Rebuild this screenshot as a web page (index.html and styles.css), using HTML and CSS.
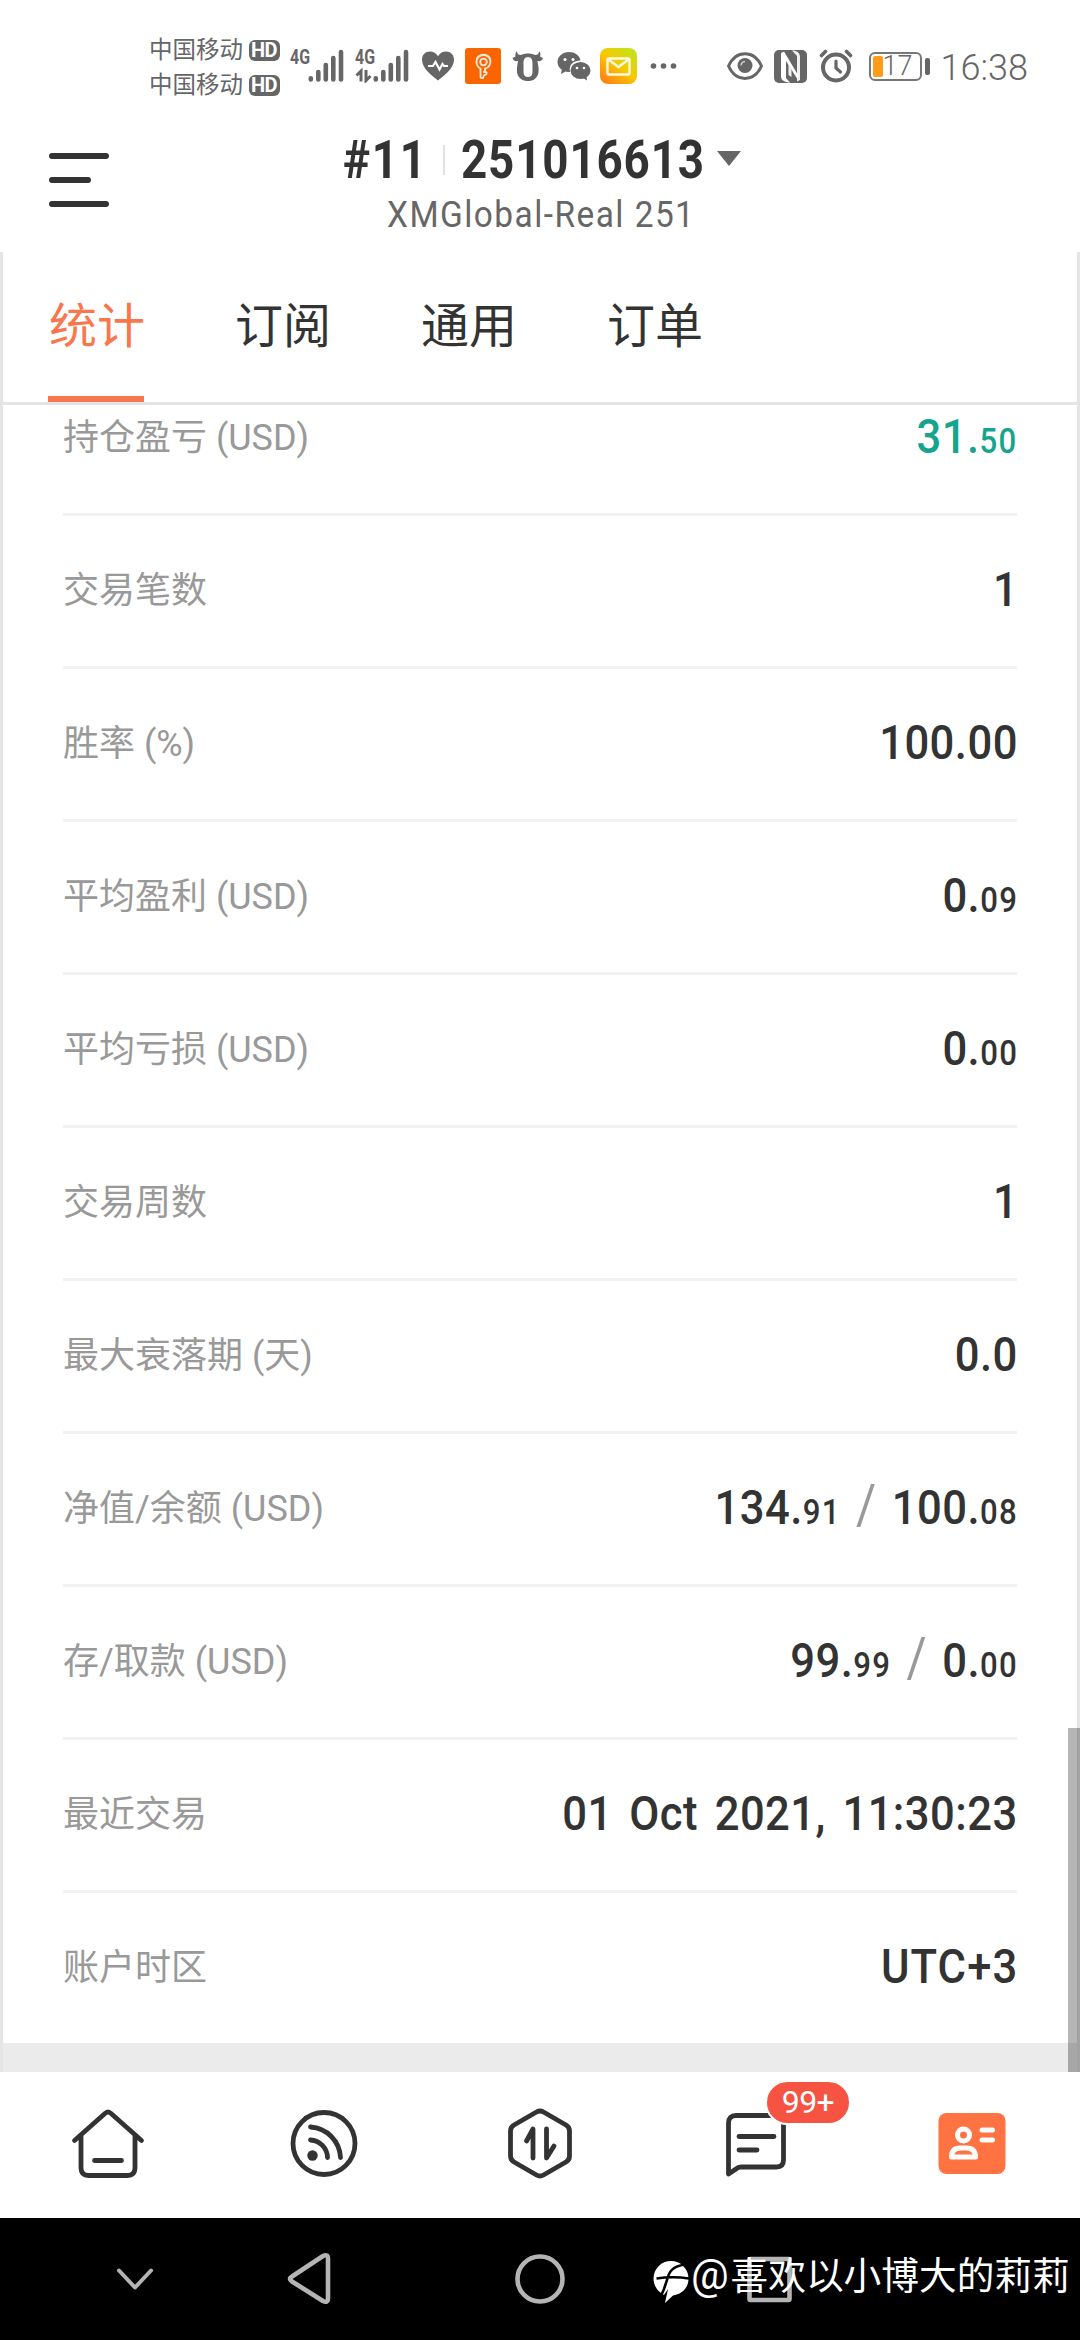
FILE: index.html
```
<!DOCTYPE html>
<html lang="zh-CN">
<head>
<meta charset="utf-8">
<title>账户统计</title>
<link rel="stylesheet" href="styles.css">
</head>
<body>
<div class="screen">
  <div class="status">
    <div class="carriers">
      <div class="carrier"><span>中国移动</span><b class="hd">HD</b></div>
      <div class="carrier"><span>中国移动</span><b class="hd">HD</b></div>
    </div>
    <div class="signal">
      <span class="net">4G</span>
      <svg width="54" height="34" viewBox="0 0 54 34"><g stroke="#666" stroke-width="4.6" stroke-linecap="round"><path d="M20.8 29.3v1.2M28.3 23v7.5M35.8 16v14.5M43.3 9v21.5M51 3v27.5"/></g></svg>
    </div>
    <div class="signal second">
      <span class="net">4G</span>
      <svg width="54" height="34" viewBox="0 0 54 34"><g stroke="#666" stroke-width="4.6" stroke-linecap="round"><path d="M20.8 29.3v1.2M28.3 23v7.5M35.8 16v14.5M43.3 9v21.5M51 3v27.5"/></g><path d="M1.500 26.500l4.500-4.500v10.500M11 21v10.500l4.500-4.500" fill="none" stroke="#666" stroke-width="3"/></svg>
    </div>
    <svg class="s-heart" width="34" height="32" viewBox="0 0 34 32"><path d="M17 30.500C12 26.500 1 18.500 1 9.700 1 4.500 4.700 1.500 8.800 1.500c3.700 0 6.500 2 8.200 4.700 1.700-2.700 4.500-4.700 8.200-4.700 4.100 0 7.800 3 7.800 8.200 0 8.800-11 16.800-16 20.800z" fill="#666"/><path d="M7 16h5l2.500-4 4 7.500 3-5.500 1.500 2h4" fill="none" stroke="#fff" stroke-width="2.200"/></svg>
    <svg class="s-pic" width="36" height="36" viewBox="0 0 36 36"><rect width="36" height="36" rx="3" fill="#fb6500"/><g fill="none" stroke="#ffeadb" stroke-width="1.800" stroke-linejoin="round"><path d="M15.500 30V20.500C12.500 19 11.500 16.500 11.500 14a7 7 0 1 1 8.500 6.600v3.400h-2M15.500 30h2.500l1-2.500 2.500-1.500v-2.500"/><circle cx="18.500" cy="14" r="3.300"/><path d="M11.500 11.500c2-5.500 11-6.500 14 0"/></g></svg>
    <svg class="s-ox" width="32" height="34" viewBox="0 0 32 34"><path fill-rule="evenodd" fill="#666" d="M5 2c0 2.500 1 4 4 4 4-2 10-2 14 0 3 0 4-1.500 4-4 1.500 1.500 2 3.500 1 5.500l3 1.500c-1 3-3 3.500-5.500 3 .5 4 1.500 7 1 11.500-1 6-5.500 8.500-10.500 8.500S6 29.500 5 23.500c-.5-4.500.5-7.500 1-11.500-2.500.5-4.500 0-5.500-3l3-1.500C3 5.500 3.500 3.500 5 2zM16 8c-3.500 0-4.500 3-4.500 6v9c0 3.500 1.500 5 4.500 5s4.500-1.500 4.500-5v-9c0-3-1-6-4.500-6z"/></svg>
    <svg class="s-chat" width="36" height="32" viewBox="0 0 36 32"><path fill="#666" d="M13 2C6.500 2 1.500 6.500 1.500 12c0 3.200 1.700 6 4.300 7.800L5 24l4.500-2.500c1.500.4 2.800.5 4.500.5C12.500 14 18 10.500 24.500 10.500 23.500 5 18.500 2 13 2z"/><ellipse cx="24.500" cy="20.500" rx="10" ry="8.600" fill="#666"/><path d="M27 28l4 2.500-.5-4.500" fill="#666"/><g fill="#fff"><circle cx="9" cy="9.500" r="1.500"/><circle cx="17" cy="9.500" r="1.500"/><circle cx="21" cy="18" r="1.300"/><circle cx="28" cy="18" r="1.300"/></g></svg>
    <svg class="s-mail" width="37" height="36" viewBox="0 0 37 36"><defs><linearGradient id="mail" x1=".1" y1="1" x2=".9" y2="0"><stop offset="0" stop-color="#ff7a1a"/><stop offset=".5" stop-color="#f8c800"/><stop offset="1" stop-color="#bde61a"/></linearGradient></defs><rect width="37" height="36" rx="8" fill="url(#mail)"/><rect x="7.500" y="10.500" width="22" height="16" rx="1.500" fill="none" stroke="#fffbe0" stroke-width="2.400"/><path d="M9 12l9.500 7 9.500-7" fill="none" stroke="#fffbe0" stroke-width="2.400"/></svg>
    <svg class="s-dots" width="28" height="8" viewBox="0 0 28 8"><g fill="#666"><circle cx="3.500" cy="4" r="2.800"/><circle cx="13.500" cy="4" r="2.800"/><circle cx="23.500" cy="4" r="2.800"/></g></svg>
    <svg class="s-eye" width="38" height="30" viewBox="0 0 38 30"><path d="M2.500 15C10 -1.500 28 -1.500 35.500 15 28 31.500 10 31.500 2.500 15z" fill="none" stroke="#666" stroke-width="3"/><circle cx="19" cy="14.500" r="7.500" fill="#666"/><path d="M15 14.500a4.500 4.500 0 0 1 4-4" stroke="#ccc" stroke-width="1.500" fill="none"/></svg>
    <svg class="s-nfc" width="33" height="33" viewBox="0 0 33 33"><rect width="33" height="33" rx="5" fill="#666"/><g fill="#fff"><path d="M7 3l3-1.500L24 25v5L12 11v17l4 4.500h-2C9 31 7 30 7 26z"/><path d="M26 30l-3 1.500V6l-5-5.500h2c4 1 6 3 6 7zM14.500 14.500l3 5V27l-3-2z" fill-opacity=".9"/></g></svg>
    <svg class="s-alarm" width="34" height="34" viewBox="0 0 34 34"><g fill="none" stroke="#666" stroke-linecap="round"><circle cx="17" cy="18.500" r="13" stroke-width="4"/><path d="M17 12v7l4.500 4" stroke-width="3.200"/><path d="M2.500 6.500l4-4M31.500 6.500l-4-4" stroke-width="3.600"/></g></svg>
    <div class="battery"><i></i><span>17</span></div><div class="nub"></div>
    <span class="clock">16:38</span>
  </div>

  <header class="header">
    <svg class="menu" width="60" height="54" viewBox="0 0 60 54"><g fill="#333"><rect width="60" height="6" rx="3"/><rect y="24" width="42" height="6" rx="3"/><rect y="48" width="60" height="6" rx="3"/></g></svg>
    <div class="account">
      <div class="account-line"><span class="num rank">#11</span><i class="divider"></i><span class="num login">251016613</span><i class="caret"></i></div>
      <div class="server">XMGlobal-Real 251</div>
    </div>
  </header>

  <main class="panel">
    <nav class="tabs"><span class="tab active">统计</span><span class="tab">订阅</span><span class="tab">通用</span><span class="tab">订单</span></nav>
    <div class="scroll">
      <div class="rows">
        <div class="row"><span class="label">持仓盈亏 (USD)</span><span class="value profit">31.<small>50</small></span></div>
        <div class="row"><span class="label">交易笔数</span><span class="value">1</span></div>
        <div class="row"><span class="label">胜率 (%)</span><span class="value">100.00</span></div>
        <div class="row"><span class="label">平均盈利 (USD)</span><span class="value">0.<small>09</small></span></div>
        <div class="row"><span class="label">平均亏损 (USD)</span><span class="value">0.<small>00</small></span></div>
        <div class="row"><span class="label">交易周数</span><span class="value">1</span></div>
        <div class="row"><span class="label">最大衰落期 (天)</span><span class="value">0.0</span></div>
        <div class="row"><span class="label">净值/余额 (USD)</span><span class="value">134.<small>91</small><em>/</em>100.<small>08</small></span></div>
        <div class="row"><span class="label">存/取款 (USD)</span><span class="value">99.<small>99</small><em>/</em>0.<small>00</small></span></div>
        <div class="row"><span class="label">最近交易</span><span class="value">01 Oct 2021, 11:30:23</span></div>
        <div class="row"><span class="label">账户时区</span><span class="value zone">UTC+3</span></div>
      </div>
    </div>
    <div class="scrollbar"></div>
  </main>

  <nav class="bottom">
    <div class="item"><svg width="80" height="80" viewBox="0 0 80 80"><g fill="none" stroke="#333" stroke-width="4.800" stroke-linecap="round" stroke-linejoin="round"><path d="M6.500 36.500L37.500 9q2.500-2 5 0L73.500 36.500M13 31.500V64q0 7.500 7.500 7.500h39q7.500 0 7.500-7.500V31.500M26.500 56.500h27"/></g></svg></div>
    <div class="item"><svg width="80" height="80" viewBox="0 0 80 80"><g fill="none" stroke="#333" stroke-width="4.800" stroke-linecap="round"><circle cx="40" cy="39.500" r="31"/><path d="M26.500 23A32 32 0 0 1 56.500 53.500M26.500 36A18 18 0 0 1 43.500 53.500"/></g><circle cx="28.500" cy="51.500" r="5.200" fill="#333"/></svg></div>
    <div class="item"><svg width="80" height="80" viewBox="0 0 80 80"><g fill="none" stroke="#333" stroke-width="4.800" stroke-linecap="round" stroke-linejoin="round"><path d="M36.500 8q3.500-2 7 0L66 21q3.500 2 3.500 6v25q0 4-3.500 6L43.500 71q-3.500 2-7 0L14 58q-3.500-2-3.500-6V27q0-4 3.500-6zM26.500 37L33 25v29M46.500 25v29l7.500-12"/></g></svg></div>
    <div class="item"><svg width="80" height="80" viewBox="0 0 80 80"><g fill="none" stroke="#333" stroke-width="4.800" stroke-linecap="round" stroke-linejoin="round"><path d="M12.500 70V19q0-7.500 7.500-7.500h41q6.500 0 6.500 6.500V56q0 7-7 7H25q-3 0-5 2zM23 32.500h35M23 46h18"/></g></svg><b class="badge">99+</b></div>
    <div class="item"><svg width="80" height="80" viewBox="0 0 80 80"><rect x="6.500" y="9" width="67" height="61" rx="8" fill="#ff7342"/><g fill="none" stroke="#fff" stroke-width="5" stroke-linecap="round" stroke-linejoin="round"><circle cx="31.500" cy="31" r="6"/><path d="M19.500 53q0-9 9-9h6q9 0 9 9zM50 26h10.500M50 36h10.500" /></g></svg></div>
  </nav>

  <footer class="sysnav">
    <svg class="keys" width="1080" height="122" viewBox="0 0 1080 122"><g fill="none" stroke="#b4b4b4" stroke-width="4.600" stroke-linecap="round" stroke-linejoin="round"><path d="M119 52.500l16 17 16-17" stroke-width="4"/><path d="M292 58.500l31-20.500q5-2.500 5 3v39q0 5.500-5 3L292 63.500q-4-2.500 0-5z"/><circle cx="540" cy="61" r="22.500"/><rect x="749.500" y="41" width="40" height="41" rx="1"/></g></svg>
    <div class="credit">
      <svg width="36" height="44" viewBox="0 0 36 44"><path d="M18 1a17.500 17.500 0 0 1 17.500 17.500C35.500 28 29 34 20 35.500L12 43l3-14-4 6C5 32 .5 26 .5 18.500A17.500 17.500 0 0 1 18 1z" fill="#fff"/><path d="M34 4.500C24 5 17 9 15 17l-4 12-4 9M3.500 18.500Q20 16 36 18.500" fill="none" stroke="#000" stroke-width="2.600"/></svg>
      <span><span class="at">@</span>喜欢以小博大的莉莉</span>
    </div>
  </footer>
</div>
</body>
</html>
```
FILE: styles.css
```
* { box-sizing: border-box; }
body {
  margin: 0;
  background: #fff;
  color: #333;
  font-family: Roboto, "Noto Sans CJK SC", sans-serif;
}
svg { display: block; flex: none; }
.screen {
  width: 1080px;
  height: 2340px;
  display: flex;
  flex-direction: column;
  overflow: hidden;
}

.status {
  height: 132px;
  padding: 0 52px 0 149px;
  display: flex;
  align-items: center;
  color: #666;
  flex: none;
}
.carriers { width: 133px; display: flex; flex-direction: column; gap: 11px; margin-top: 3px; }
.carrier { display: flex; align-items: center; justify-content: space-between; height: 24px; font-size: 23.5px; line-height: 24px; }
.hd { width: 31px; height: 21px; border-radius: 6px; background: #666; color: #fff; font-size: 20px; line-height: 21px; text-align: center; letter-spacing: -.5px; }
.signal { position: relative; margin-left: 10px; width: 54px; }
.signal.second { margin-left: 11px; }
.net { position: absolute; left: 0; top: -2px; font-size: 21px; line-height: 20px; font-weight: 700; transform: scaleX(.76); transform-origin: left; }
.s-heart { margin-left: 12px; }
.s-pic { margin-left: 10px; }
.s-ox { margin-left: 11px; }
.s-chat { margin-left: 12px; }
.s-mail { margin-left: 8px; }
.s-dots { margin-left: 13px; }
.s-eye { margin-left: 48px; }
.s-nfc { margin-left: 10px; }
.s-alarm { margin-left: 12px; }
.battery { margin-left: 16px; width: 53px; height: 29px; flex: none; border: 2px solid #777; border-radius: 6px; padding: 2px; display: flex; align-items: center; }
.battery i { width: 10px; height: 21px; background: #ff9c1c; border-radius: 2px; flex: none; }
.battery span { font-size: 27px; line-height: 25px; font-weight: 300; }
.nub { width: 5px; height: 17px; border-radius: 2px; background: #666; margin-left: 3px; flex: none; }
.clock { margin-left: 11px; font-size: 36px; font-weight: 300; line-height: 40px; padding-top: 3px; }

.header { height: 120px; display: flex; position: relative; flex: none; }
.menu { margin: 21px 0 0 49px; }
.account { display: flex; flex-direction: column; width: 400px; margin-left: 234px; padding-top: 1px; }
.account-line { display: flex; align-items: center; height: 54px; }
.num { font-weight: 700; font-size: 53.5px; line-height: 54px; letter-spacing: 1px; transform: scaleX(.855); transform-origin: left; flex: none; }
.rank { width: 100px; letter-spacing: 2px; }
.login { width: 256px; }
.divider { width: 2px; height: 30px; background: #e2e2e2; margin-right: 16px; flex: none; }
.caret { flex: none; border: 12px solid transparent; border-top: 15px solid #666; border-bottom: 0; margin-top: -4px; }
.server { margin-left: 44px; color: #666; font-size: 36.5px; line-height: 44px; margin-top: 6px; letter-spacing: 1.6px; white-space: nowrap; transform: scaleX(.915); transform-origin: left; }

.panel {
  position: relative;
  height: 1820px;
  flex: none;
  border: solid #e5e5e5;
  border-width: 0 3px;
  display: flex;
  flex-direction: column;
}
.tabs { height: 153px; flex: none; display: flex; gap: 90px; padding-left: 45px; border-bottom: 3px solid #e5e5e5; }
.tab { font-size: 48px; line-height: 144px; height: 150px; width: 96px; padding-top: 3px; text-indent: 1px; white-space: nowrap; }
.tab.active { color: #f7774f; border-bottom: 6px solid #f7774f; }
.scroll { flex: 1; overflow: hidden; background: #ebebec; }
.rows { padding: 0 60px; background: #fff; margin-top: -42px; }
.row { height: 153px; display: flex; align-items: center; justify-content: space-between; border-bottom: 3px solid #f2f2f2; }
.row:last-child { height: 150px; border-bottom: 0; }
.label { font-size: 36px; line-height: 40px; color: #999; }
.value { font-size: 49px; line-height: 50px; font-weight: 500; letter-spacing: .5px; word-spacing: 6px; transform: scaleX(.89); transform-origin: right; white-space: nowrap; margin: -2px -1px 0 0; }
.value.zone { letter-spacing: 1.2px; }
.value small { font-size: 35px; line-height: 0; letter-spacing: 1.5px; }
.value em { font-style: normal; font-size: 55px; line-height: 0; font-weight: 400; color: #999; margin: 0 17px; }
.profit { color: #16a58c; }
.scrollbar { position: absolute; right: -3px; bottom: 0; width: 12px; height: 344px; background: rgba(0, 0, 0, .29); }

.bottom { height: 146px; flex: none; display: grid; grid-template-columns: repeat(5, 1fr); padding-top: 32px; }
.item { position: relative; display: flex; justify-content: center; align-items: flex-start; }
.badge { position: absolute; left: 117px; top: -24px; width: 86px; height: 45px; border: 2px solid #fff; border-radius: 23px; background: #f65343; color: #fff; font-size: 32px; line-height: 41px; font-weight: 400; text-align: center; letter-spacing: -.6px; }

.sysnav { position: relative; height: 122px; flex: none; background: #000; }
.credit { position: absolute; left: 653px; top: 34px; display: flex; align-items: flex-start; gap: 2px; color: #fff; }
.credit svg { margin-top: 8px; }
.credit span { font-size: 37.7px; line-height: 48px; white-space: nowrap; }
.credit .at { display: inline-block; width: 39.500px; font-size: 42px; line-height: 40px; }
```
